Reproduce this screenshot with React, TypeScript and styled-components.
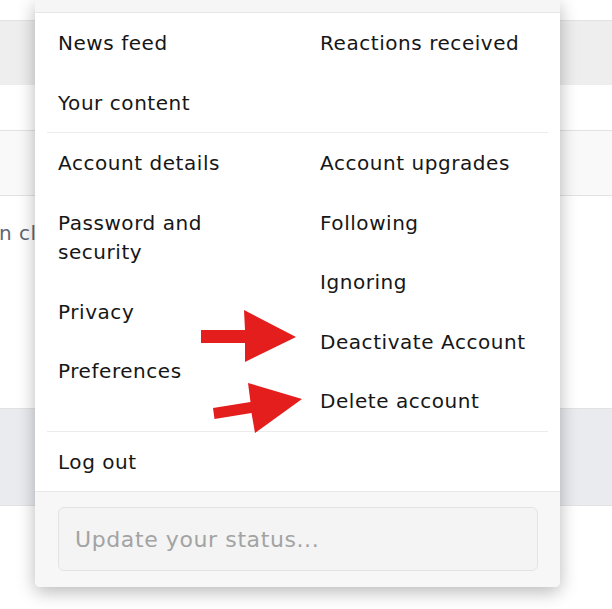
import React from "react";
import styled, { createGlobalStyle } from "styled-components";

const GlobalStyle = createGlobalStyle`
  html, body { margin: 0; padding: 0; background: #ffffff; }
  body { overflow: hidden; font-family: "DejaVu Sans", "Open Sans", sans-serif; }
`;

const Page = styled.div`
  position: relative;
  width: 612px;
  height: 609px;
  overflow: hidden;
  background: #ffffff;
`;

const BgRow = styled.div<{ $h: number; $bg: string; $line?: boolean }>`
  height: ${(p) => p.$h}px;
  background: ${(p) => p.$bg};
  border-bottom: ${(p) => (p.$line ? "1px solid #e2e2e2" : "none")};
  box-sizing: border-box;
`;

const BgText = styled.div`
  height: 213px;
  box-sizing: border-box;
  border-bottom: 1px solid #e2e2e2;
  padding-top: 22px;
  font-family: "DejaVu Sans", "Open Sans", sans-serif;
  font-size: 20px;
  line-height: 30px;
  color: #5f6672;
  white-space: nowrap;
  margin-left: -1px;
  letter-spacing: 0.5px;
`;

const Menu = styled.div`
  position: absolute;
  left: 35px;
  top: 0;
  width: 525px;
  background: #ffffff;
  border-radius: 0 0 5px 5px;
  box-shadow: 0 5px 18px rgba(0, 0, 0, 0.28);
  overflow: hidden;
`;

const MenuHeader = styled.div`
  height: 12px;
  background: #f6f6f6;
  border-bottom: 1px solid #e6e6e6;
`;

const MenuBody = styled.div`
  padding: 0 12px;
`;

const Group = styled.div<{ $last?: boolean }>`
  display: grid;
  grid-template-columns: 262px 1fr;
  border-bottom: ${(p) => (p.$last ? "none" : "1px solid #ececec")};
`;

const Column = styled.div`
  display: flex;
  flex-direction: column;
`;

const Item = styled.a`
  display: block;
  padding: 16px 11px 14px;
  font-size: 20px;
  line-height: 29.5px;
  color: #161616;
  text-decoration: none;
  letter-spacing: 0.55px;
`;

const Footer = styled.div`
  background: #f7f7f7;
  border-top: 1px solid #e8e8e8;
  padding: 15px 22px 16px 23px;
`;

const StatusInput = styled.div`
  height: 64px;
  box-sizing: border-box;
  border: 1px solid #e3e3e3;
  border-radius: 6px;
  background: #f4f4f4;
  padding-left: 16px;
  display: flex;
  align-items: center;
  font-size: 22px;
  letter-spacing: 0.6px;
  color: #a3a3a3;
`;

const Arrows = styled.svg`
  position: absolute;
  left: 0;
  top: 0;
  pointer-events: none;
`;

export default function App() {
  return (
    <Page>
      <GlobalStyle />
      <BgRow $h={21} $bg="#ffffff" $line />
      <BgRow $h={64} $bg="#eeeeee" />
      <BgRow $h={46} $bg="#ffffff" $line />
      <BgRow $h={65} $bg="#f9f9f9" $line />
      <BgText>n click</BgText>
      <BgRow $h={97} $bg="#e9ebef" $line />

      <Menu>
        <MenuHeader />
        <MenuBody>
          <Group>
            <Column>
              <Item>News feed</Item>
              <Item>Your content</Item>
            </Column>
            <Column>
              <Item>Reactions received</Item>
            </Column>
          </Group>
          <Group>
            <Column>
              <Item>Account details</Item>
              <Item>
                Password and
                <br />
                security
              </Item>
              <Item>Privacy</Item>
              <Item>Preferences</Item>
            </Column>
            <Column>
              <Item>Account upgrades</Item>
              <Item>Following</Item>
              <Item>Ignoring</Item>
              <Item>Deactivate Account</Item>
              <Item>Delete account</Item>
            </Column>
          </Group>
          <Group $last>
            <Column>
              <Item>Log out</Item>
            </Column>
          </Group>
        </MenuBody>
        <Footer>
          <StatusInput>Update your status...</StatusInput>
        </Footer>
      </Menu>

      <Arrows width="612" height="609" viewBox="0 0 612 609">
        <polygon
          fill="#e41d1d"
          points="201,330 245,330 244,310 296,337 245,362 245,343 201,343"
        />
        <polygon
          fill="#e41d1d"
          points="213,408 250.5,402 248,383 302,399 255,433 251.5,413 214.5,419"
        />
      </Arrows>
    </Page>
  );
}
